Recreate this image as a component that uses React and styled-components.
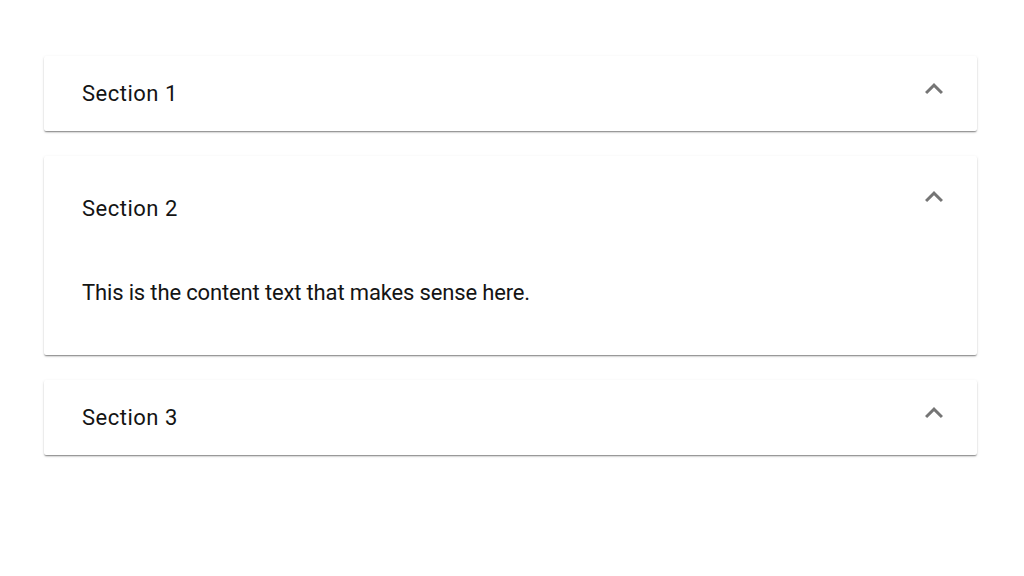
import * as React from "react";
import styled, { createGlobalStyle } from "styled-components";

const GlobalStyle = createGlobalStyle`
html, body {
    margin: 0;
    padding: 0;
    background: #ffffff;
}
body {
    font-family: Roboto, "Liberation Sans", Arial, sans-serif;
}
`

const Page = styled.div`
display: flex;
flex-direction: column;
gap: 25px;
padding: 56px 47px 60px 44px;
`

const Card = styled.div`
background-color: #ffffff;
box-shadow: 0 2px 2px -1px rgba(0,0,0,0.32), 0 1px 1px 0 rgba(0,0,0,0.16), 0 1px 3px 0 rgba(0,0,0,0.12);
border-radius: 2px;
`

const Header = styled.div`
display: flex;
align-items: flex-start;
justify-content: space-between;
padding: ${p => p.$open ? "38px 25px 0 38px" : "23px 25px 22px 38px"};
`

const Title = styled.div`
font-size: 22px;
line-height: 30px;
color: #141414;
letter-spacing: 0.5px;
`

const Chevron = styled.svg`
width: 36px;
height: 36px;
margin-top: ${p => p.$open ? "-15px" : "-8px"};
fill: #757575;
`

const Body = styled.div`
padding: 54px 38px 47px 38px;
font-size: 22px;
line-height: 30px;
color: #141414;
letter-spacing: -0.15px;
`

const sections = [
    { title: "Section 1", open: false },
    { title: "Section 2", open: true, text: "This is the content text that makes sense here." },
    { title: "Section 3", open: false },
];

export default function App() {
    return (
        <>
            <GlobalStyle />
            <Page>
                {sections.map(s => (
                    <Card key={s.title}>
                        <Header $open={s.open}>
                            <Title>{s.title}</Title>
                            <Chevron $open={s.open} viewBox="0 0 24 24">
                                <path d="M12 8l-6 6 1.41 1.41L12 10.83l4.59 4.58L18 14z" />
                            </Chevron>
                        </Header>
                        {s.open && <Body>{s.text}</Body>}
                    </Card>
                ))}
            </Page>
        </>
    );
}
